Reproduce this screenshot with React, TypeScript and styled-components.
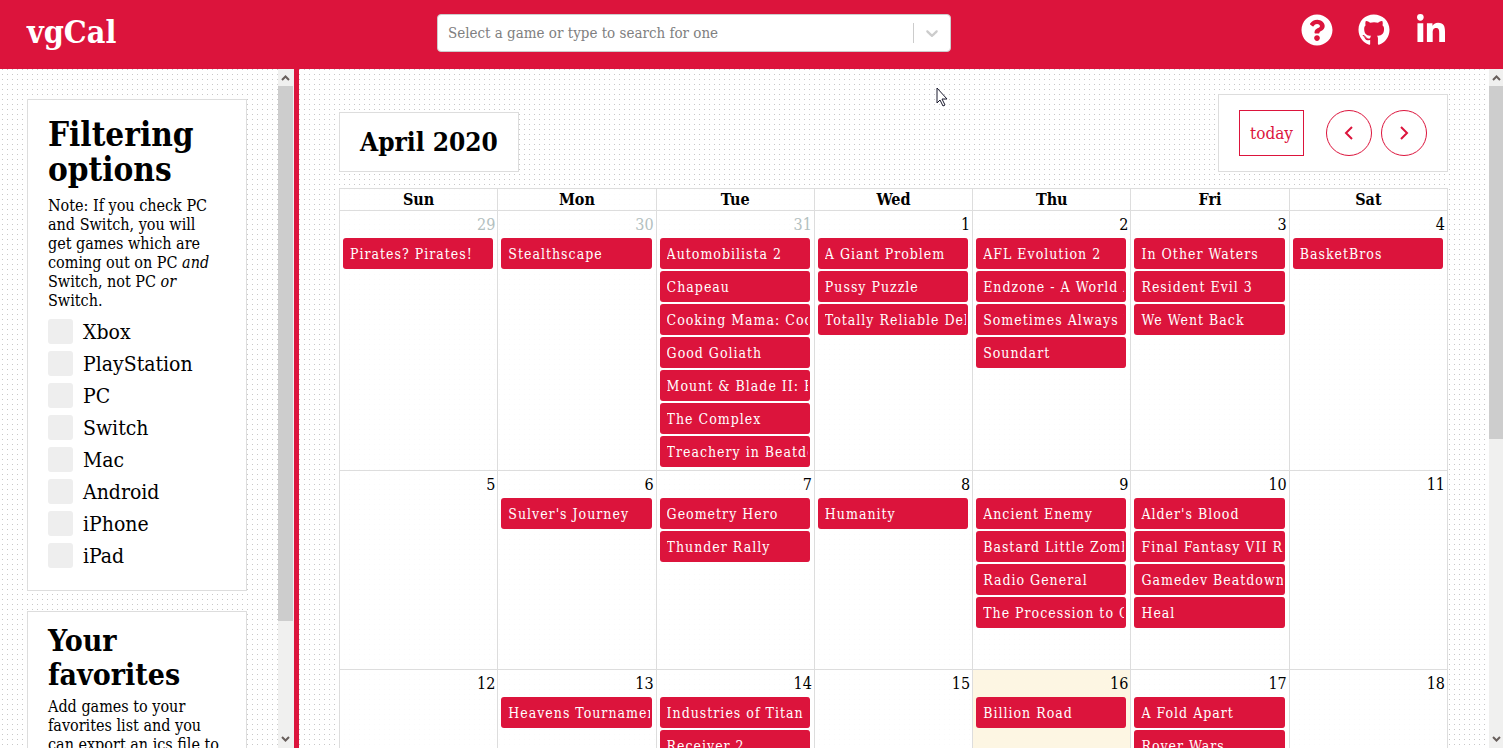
import React from "react";
import styled, { createGlobalStyle, css } from "styled-components";
import { FaGithub, FaLinkedinIn, FaQuestionCircle } from "react-icons/fa";

const CRIMSON = "#dc143c";
const LINE = "#dddddd";

const GlobalStyle = createGlobalStyle`
  * { box-sizing: border-box; }
  body {
    margin: 0;
    overflow: hidden;
    color: #000;
    background: #fff;
    font-family: "Roboto Slab", "DejaVu Serif Condensed", "DejaVu Serif", serif;
    font-size: 16px;
  }
  button, input { font-family: inherit; }
`;

const dots = css`
  background-color: #fff;
  background-image: conic-gradient(at 1px 1px, transparent 75%, #c8c8c8 0);
  background-size: 5px 5px;
`;

const Page = styled.div`
  display: grid;
  grid-template: 69px minmax(0, 1fr) / 299px minmax(0, 1fr);
  height: 100vh;
`;

const Header = styled.header`
  grid-column: 1 / -1;
  display: grid;
  grid-template-columns: 410fr 514fr 496fr;
  align-items: start;
  padding: 14px 56px 0 27px;
  background: ${CRIMSON};
  color: #fff;
`;

const Logo = styled.h1`
  margin: 0;
  font-size: 32px;
  line-height: 36px;
`;

const SearchBox = styled.form`
  display: flex;
  align-items: center;
  height: 38px;
  border: 1px solid #ccc;
  border-radius: 4px;
  background: #fff;
`;

const SearchInput = styled.input`
  flex: 1;
  min-width: 0;
  padding: 0 10px;
  border: 0;
  outline: 0;
  background: none;
  font-size: 15px;
  &::placeholder { color: #808080; opacity: 1; }
`;

const SearchToggle = styled.button`
  display: flex;
  padding: 0 8px;
  border: 0;
  border-left: 1px solid #ccc;
  background: none;
  color: #ccc;
`;

const HeaderLinks = styled.nav`
  display: flex;
  justify-content: flex-end;
  gap: 25px;
`;

const IconLink = styled.a`
  display: flex;
  color: #fff;
  font-size: 32px;
`;

const Sidebar = styled.aside`
  display: flex;
  border-right: 5px solid ${CRIMSON};
  ${dots}
  background-position: 2px 0;
`;

const SidebarContent = styled.div`
  flex: 1;
  min-width: 0;
  overflow: hidden;
  padding: 30px 31px 0 27px;
`;

const Card = styled.section<{ $compact?: boolean }>`
  padding: ${(p) => (p.$compact ? 12 : 17)}px 20px 18px;
  margin-bottom: 20px;
  border: 1px solid ${LINE};
  background: #fff;
`;

const CardTitle = styled.h2<{ $compact?: boolean }>`
  margin: 0 0 ${(p) => (p.$compact ? 5 : 9)}px;
  font-size: ${(p) => (p.$compact ? 30 : 33)}px;
  line-height: ${(p) => (p.$compact ? 34 : 35)}px;
`;

const CardText = styled.p`
  margin: 0 6px 6px 0;
  line-height: 19px;
`;

const Option = styled.label`
  display: flex;
  align-items: center;
  gap: 10px;
  height: 32px;
  font-size: 21px;
`;

const Checkbox = styled.input`
  appearance: none;
  width: 25px;
  height: 25px;
  margin: 0 0 2px;
  border-radius: 3px;
  background: #eee;
  &:checked { background: ${CRIMSON}; }
`;

const Main = styled.main`
  display: flex;
  ${dots}
`;

const MainContent = styled.div`
  flex: 1;
  min-width: 0;
  overflow: hidden;
  padding: 25px 41px 0 40px;
`;

const Toolbar = styled.div`
  display: flex;
  justify-content: space-between;
  align-items: flex-end;
  margin-bottom: 16px;
`;

const MonthTitle = styled.h2`
  margin: 0;
  padding: 0 20px;
  border: 1px solid ${LINE};
  background: #fff;
  font-size: 26px;
  line-height: 58px;
`;

const Controls = styled.div`
  display: flex;
  gap: 9px;
  padding: 15px 20px;
  border: 1px solid ${LINE};
  background: #fff;
`;

const ControlButton = styled.button<{ $round?: boolean }>`
  display: flex;
  align-items: center;
  justify-content: center;
  width: ${(p) => (p.$round ? 46 : 65)}px;
  height: 46px;
  margin-right: ${(p) => (p.$round ? 0 : 13)}px;
  padding: 0;
  border: 1px solid ${CRIMSON};
  border-radius: ${(p) => (p.$round ? "50%" : "0")};
  background: #fff;
  color: ${CRIMSON};
  font-size: 17px;
`;

const Calendar = styled.table`
  width: 100%;
  table-layout: fixed;
  border-collapse: collapse;
  background: rgba(255, 255, 255, 0.9);
`;

const Weekday = styled.th`
  height: 22px;
  padding: 1px 0 0;
  border: 1px solid ${LINE};
  font-size: 16px;
  line-height: 20px;
`;

const Day = styled.td<{ $today?: boolean }>`
  height: 199px;
  padding: 3px 4px 1px 3px;
  border: 1px solid ${LINE};
  vertical-align: top;
  background: ${(p) => (p.$today ? "#fdf6e3" : "transparent")};
`;

const DayNumber = styled.div<{ $muted?: boolean }>`
  height: 24px;
  margin-right: -2px;
  text-align: right;
  font-size: 16px;
  line-height: 22px;
  color: ${(p) => (p.$muted ? "#b3c0c0" : "#000")};
`;

const Event = styled.a`
  display: block;
  margin-bottom: 2px;
  padding-top: 1px;
  border: solid ${CRIMSON};
  border-width: 0 2px 0 7px;
  border-radius: 3px;
  overflow: hidden;
  background: ${CRIMSON};
  color: #fff;
  font-size: 14px;
  line-height: 30px;
  letter-spacing: 1px;
  text-decoration: none;
  white-space: nowrap;
`;

const Track = styled.div<{ $width: number }>`
  display: flex;
  flex-direction: column;
  flex: none;
  width: ${(p) => p.$width}px;
  background: #f0f0ef;
`;

const TrackArrow = styled.div`
  display: flex;
  justify-content: center;
  align-items: center;
  flex: none;
  width: 15px;
  height: 17px;
  color: #685f5c;
`;

const Thumb = styled.div<{ $share: number }>`
  flex: ${(p) => p.$share};
  width: 15px;
  background: #cdcdcd;
`;

const TrackRest = styled.div<{ $share: number }>`
  flex: ${(p) => p.$share};
`;

const Cursor = styled.svg`
  position: absolute;
  left: 936px;
  top: 87px;
  pointer-events: none;
`;

function ScrollTrack({ width, thumb }: { width: number; thumb: number }) {
  return (
    <Track $width={width} aria-hidden="true">
      <TrackArrow>
        <svg width="9" height="7" fill="none" stroke="currentColor" strokeWidth="2">
          <path d="M1 6 4.5 2.5 8 6" />
        </svg>
      </TrackArrow>
      <Thumb $share={thumb} />
      <TrackRest $share={1000 - thumb} />
      <TrackArrow>
        <svg width="9" height="7" fill="none" stroke="currentColor" strokeWidth="2">
          <path d="M1 1 4.5 4.5 8 1" />
        </svg>
      </TrackArrow>
    </Track>
  );
}

const platforms = ["Xbox", "PlayStation", "PC", "Switch", "Mac", "Android", "iPhone", "iPad"];
const weekdays = ["Sun", "Mon", "Tue", "Wed", "Thu", "Fri", "Sat"];

interface DayData {
  day: number;
  games: string[];
  muted?: boolean;
  today?: boolean;
}

const weeks: DayData[][] = [
  [
    { day: 29, muted: true, games: ["Pirates? Pirates!"] },
    { day: 30, muted: true, games: ["Stealthscape"] },
    {
      day: 31,
      muted: true,
      games: [
        "Automobilista 2",
        "Chapeau",
        "Cooking Mama: Cookstar",
        "Good Goliath",
        "Mount & Blade II: Bannerlord",
        "The Complex",
        "Treachery in Beatdown City",
      ],
    },
    { day: 1, games: ["A Giant Problem", "Pussy Puzzle", "Totally Reliable Delivery Service"] },
    { day: 2, games: ["AFL Evolution 2", "Endzone - A World Apart", "Sometimes Always Monsters", "Soundart"] },
    { day: 3, games: ["In Other Waters", "Resident Evil 3", "We Went Back"] },
    { day: 4, games: ["BasketBros"] },
  ],
  [
    { day: 5, games: [] },
    { day: 6, games: ["Sulver's Journey"] },
    { day: 7, games: ["Geometry Hero", "Thunder Rally"] },
    { day: 8, games: ["Humanity"] },
    { day: 9, games: ["Ancient Enemy", "Bastard Little Zombies", "Radio General", "The Procession to Calvary"] },
    { day: 10, games: ["Alder's Blood", "Final Fantasy VII Remake", "Gamedev Beatdown", "Heal"] },
    { day: 11, games: [] },
  ],
  [
    { day: 12, games: [] },
    { day: 13, games: ["Heavens Tournament"] },
    { day: 14, games: ["Industries of Titan", "Receiver 2"] },
    { day: 15, games: [] },
    { day: 16, today: true, games: ["Billion Road"] },
    { day: 17, games: ["A Fold Apart", "Rover Wars"] },
    { day: 18, games: [] },
  ],
];

export default function App() {
  return (
    <Page>
      <GlobalStyle />
      <Header>
        <Logo>vgCal</Logo>
        <SearchBox role="search">
          <SearchInput aria-label="Search games" placeholder="Select a game or type to search for one" />
          <SearchToggle type="button" aria-label="Show games">
            <svg width="20" height="20" viewBox="0 0 20 20" fill="currentColor">
              <path d="M4.516 7.548c0.436-0.446 1.043-0.481 1.576 0l3.908 3.747 3.908-3.747c0.533-0.481 1.141-0.446 1.574 0 0.436 0.445 0.408 1.197 0 1.615-0.406 0.418-4.695 4.502-4.695 4.502-0.217 0.223-0.502 0.335-0.787 0.335s-0.57-0.112-0.789-0.335c0 0-4.287-4.084-4.695-4.502s-0.436-1.17 0-1.615z" />
            </svg>
          </SearchToggle>
        </SearchBox>
        <HeaderLinks>
          <IconLink href="#help" aria-label="Help"><FaQuestionCircle /></IconLink>
          <IconLink href="#github" aria-label="GitHub"><FaGithub /></IconLink>
          <IconLink href="#linkedin" aria-label="LinkedIn"><FaLinkedinIn /></IconLink>
        </HeaderLinks>
      </Header>

      <Sidebar>
        <SidebarContent>
          <Card>
            <CardTitle>Filtering options</CardTitle>
            <CardText>
              Note: If you check PC and Switch, you will get games which are coming out on PC <em>and</em> Switch,
              not PC <em>or</em> Switch.
            </CardText>
            {platforms.map((name) => (
              <Option key={name}>
                <Checkbox type="checkbox" />
                {name}
              </Option>
            ))}
          </Card>
          <Card $compact>
            <CardTitle $compact>Your favorites</CardTitle>
            <CardText>Add games to your favorites list and you can export an ics file to</CardText>
          </Card>
        </SidebarContent>
        <ScrollTrack width={16} thumb={829} />
      </Sidebar>

      <Main>
        <MainContent>
          <Toolbar>
            <MonthTitle>April 2020</MonthTitle>
            <Controls>
              <ControlButton type="button">today</ControlButton>
              <ControlButton type="button" $round aria-label="Previous month">
                <svg width="10" height="16" fill="none" stroke="currentColor" strokeWidth="2">
                  <path d="M8 2 2 8l6 6" />
                </svg>
              </ControlButton>
              <ControlButton type="button" $round aria-label="Next month">
                <svg width="10" height="16" fill="none" stroke="currentColor" strokeWidth="2">
                  <path d="M2 2l6 6-6 6" />
                </svg>
              </ControlButton>
            </Controls>
          </Toolbar>
          <Calendar>
            <thead>
              <tr>
                {weekdays.map((name) => (
                  <Weekday key={name} scope="col">{name}</Weekday>
                ))}
              </tr>
            </thead>
            <tbody>
              {weeks.map((week) => (
                <tr key={week[0].day}>
                  {week.map(({ day, games, muted, today }) => (
                    <Day key={day} $today={today}>
                      <DayNumber $muted={muted}>{day}</DayNumber>
                      {games.map((game) => (
                        <Event key={game} href="#game">{game}</Event>
                      ))}
                    </Day>
                  ))}
                </tr>
              ))}
            </tbody>
          </Calendar>
        </MainContent>
        <ScrollTrack width={14} thumb={547} />
      </Main>

      <Cursor width="13" height="21" viewBox="0 0 13 21" aria-hidden="true">
        <path d="M1 1v15l3-3 3 6 2-1-3-6h5z" fill="#fff" stroke="#1a1a2e" />
      </Cursor>
    </Page>
  );
}
